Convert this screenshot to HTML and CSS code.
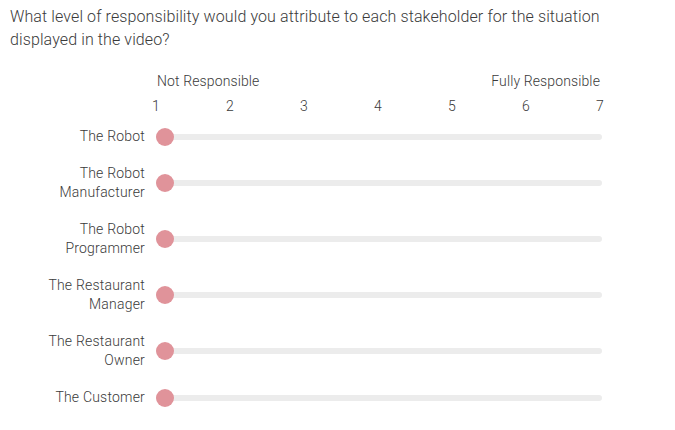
FILE: index.html
```html
<!DOCTYPE html>
<html>
<head>
<meta charset="utf-8">
<link rel="stylesheet" href="styles.css">
</head>
<body>
<div class="survey">
  <p class="question">What level of responsibility would you attribute to each stakeholder for the situation displayed in the video?</p>
  <div class="scale">
    <div class="anchors">
      <span>Not Responsible</span>
      <span>Fully Responsible</span>
    </div>
    <div class="numbers">
      <span>1</span><span>2</span><span>3</span><span>4</span><span>5</span><span>6</span><span>7</span>
    </div>
  </div>
  <div class="rows">
    <div class="row"><div class="label">The Robot</div><div class="slider"><div class="track"></div><div class="handle"></div></div></div>
    <div class="row"><div class="label">The Robot<br>Manufacturer</div><div class="slider"><div class="track"></div><div class="handle"></div></div></div>
    <div class="row"><div class="label">The Robot<br>Programmer</div><div class="slider"><div class="track"></div><div class="handle"></div></div></div>
    <div class="row"><div class="label">The Restaurant<br>Manager</div><div class="slider"><div class="track"></div><div class="handle"></div></div></div>
    <div class="row"><div class="label">The Restaurant<br>Owner</div><div class="slider"><div class="track"></div><div class="handle"></div></div></div>
    <div class="row"><div class="label">The Customer</div><div class="slider"><div class="track"></div><div class="handle"></div></div></div>
  </div>
</div>
</body>
</html>
```
FILE: styles.css
```css
* { box-sizing: border-box; }
html, body { margin: 0; padding: 0; background: #fff; }
body {
  font-family: Roboto, "Liberation Sans", sans-serif;
  font-weight: 300;
  color: #3a3a3a;
}
.survey { padding: 5px 0 0 10px; width: 675px; }
.question {
  margin: 0;
  font-size: 16px;
  line-height: 23px;
  letter-spacing: 0.11px;
  width: 610px;
}
.scale { margin-top: 20px; padding-left: 146px; width: 610px; }
.anchors {
  display: flex;
  justify-content: space-between;
  font-size: 14px;
  line-height: 20px;
  letter-spacing: 0.12px;
  padding-left: 1px;
  width: 444px;
}
.numbers {
  display: flex;
  justify-content: space-between;
  margin-top: 5px;
  width: 464px;
  margin-left: -10px;
  font-size: 14px;
  line-height: 20px;
}
.numbers span { width: 20px; text-align: center; }
.rows {
  margin-top: 11px;
  display: flex;
  flex-direction: column;
  gap: 18px;
}
.row {
  display: grid;
  grid-template-columns: 135px 457px;
  column-gap: 11px;
  align-items: center;
}
.label {
  text-align: right;
  font-size: 14px;
  line-height: 19px;
  letter-spacing: 0.2px;
}
.slider {
  position: relative;
  height: 18px;
  display: flex;
  align-items: center;
}
.track {
  width: 446px;
  height: 6px;
  border-radius: 3px;
  background: #ececec;
}
.handle {
  position: absolute;
  left: 0;
  top: 0;
  width: 18px;
  height: 18px;
  border-radius: 50%;
  background: #e0939a;
}
```
